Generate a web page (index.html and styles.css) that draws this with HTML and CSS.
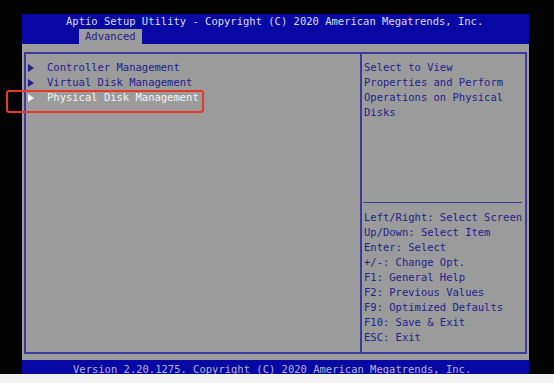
FILE: index.html
```html
<!DOCTYPE html>
<html>
<head>
<meta charset="utf-8">
<link rel="stylesheet" href="styles.css">
</head>
<body>
<div class="page">
  <div class="screen">
    <div class="header">
      <div class="title">Aptio Setup Utility - Copyright (C) 2020 American Megatrends, Inc.</div>
      <div class="tabs"><span class="tab">Advanced</span></div>
    </div>
    <div class="main">
      <div class="frame">
        <div class="left">
          <div class="item"><svg class="arrow" width="6" height="8" viewBox="0 0 6 8"><path d="M0 0 L6 4 L0 8 Z"/></svg><span>Controller Management</span></div>
          <div class="item"><svg class="arrow" width="6" height="8" viewBox="0 0 6 8"><path d="M0 0 L6 4 L0 8 Z"/></svg><span>Virtual Disk Management</span></div>
          <div class="item selected"><svg class="arrow" width="6" height="8" viewBox="0 0 6 8"><path d="M0 0 L6 4 L0 8 Z"/></svg><span>Physical Disk Management</span></div>
        </div>
        <div class="right">
          <div class="help">Select to View<br>Properties and Perform<br>Operations on Physical<br>Disks</div>
          <div class="sep"></div>
          <div class="keys">
            <div>Left/Right: Select Screen</div>
            <div>Up/Down: Select Item</div>
            <div>Enter: Select</div>
            <div>+/-: Change Opt.</div>
            <div>F1: General Help</div>
            <div>F2: Previous Values</div>
            <div>F9: Optimized Defaults</div>
            <div>F10: Save &amp; Exit</div>
            <div>ESC: Exit</div>
          </div>
        </div>
      </div>
    </div>
    <div class="footer">Version 2.20.1275. Copyright (C) 2020 American Megatrends, Inc.</div>
  </div>
  <div class="strip"></div>
  <div class="highlight"></div>
</div>
</body>
</html>
```
FILE: styles.css
```css
html, body {
  margin: 0;
  padding: 0;
  background: #030303;
}
.page {
  position: relative;
  width: 554px;
  height: 383px;
  overflow: hidden;
  background: #030303;
  font-family: "DejaVu Sans Mono", "Liberation Mono", monospace;
  font-size: 10.5px;
  line-height: 15px;
}
.screen {
  margin-left: 22px;
  padding-top: 14px;
  width: 507px;
}
.header {
  background: #0808a4;
  height: 30px;
}
.title {
  height: 15px;
  padding-left: 44px;
  color: #dcdcec;
  white-space: nowrap;
}
.tabs {
  padding-left: 57px;
  height: 15px;
}
.tab {
  display: inline-block;
  width: 57px;
  height: 15px;
  padding-left: 6px;
  background: #9b9b9b;
  color: #22228e;
}
.main {
  background: #9b9b9b;
  height: 302px;
  padding: 8px 2px 6px 2px;
}
.frame {
  display: flex;
  height: 298px;
  border: 2px solid #3b3b9e;
}
.left {
  width: 334px;
  padding-top: 6px;
  border-right: 2px solid #3b3b9e;
}
.item {
  display: flex;
  align-items: center;
  height: 15px;
  color: #22228e;
  white-space: nowrap;
}
.arrow {
  margin-left: 2px;
  margin-right: 13px;
  fill: #22228e;
}
.item.selected {
  color: #f4f4f4;
}
.item.selected .arrow {
  fill: #f4f4f4;
}
.right {
  flex: 1;
  display: flex;
  flex-direction: column;
  padding-top: 6px;
  color: #22228e;
  white-space: nowrap;
}
.help {
  padding-left: 2px;
}
.sep {
  margin-top: auto;
  margin-left: 1px;
  margin-right: 3px;
  border-top: 1px solid #3b3b9e;
}
.keys {
  margin-top: 7px;
  padding-left: 2px;
  padding-bottom: 7px;
}
.footer {
  margin-top: 0;
  background: #0808a4;
  height: 12px;
  padding-top: 2px;
  padding-left: 51px;
  color: #b4b4d2;
  white-space: nowrap;
  overflow: hidden;
}
.strip {
  background: #f2f2f2;
  height: 9px;
}
.highlight {
  position: absolute;
  left: 6px;
  top: 90px;
  width: 194px;
  height: 19px;
  border: 2px solid #e8382c;
  border-radius: 3px;
}
```
